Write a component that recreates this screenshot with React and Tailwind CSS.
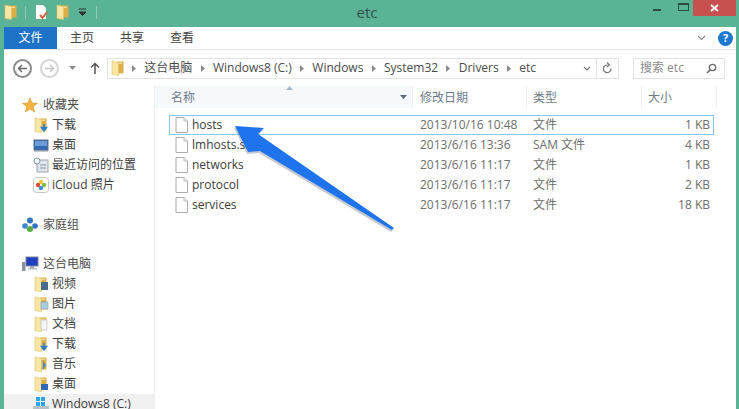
import React from 'react';

const FONT = "font-['Open_Sans','Noto_Sans_CJK_SC',sans-serif]";

const files = [
  { name: 'hosts', date: '2013/10/16 10:48', type: '文件', size: '1 KB', selected: true },
  { name: 'lmhosts.sam', date: '2013/6/16 13:36', type: 'SAM 文件', size: '4 KB' },
  { name: 'networks', date: '2013/6/16 11:17', type: '文件', size: '1 KB' },
  { name: 'protocol', date: '2013/6/16 11:17', type: '文件', size: '2 KB' },
  { name: 'services', date: '2013/6/16 11:17', type: '文件', size: '18 KB' },
];

const crumbs = ['这台电脑', 'Windows8 (C:)', 'Windows', 'System32', 'Drivers', 'etc'];

const Folder = ({ children }) => (
  <svg width="16" height="16" viewBox="0 0 16 16" className="shrink-0">
    <path d="M7 1.5 H13.5 V13.5 H7 Z" fill="#dcae45" />
    <path d="M8 2.5 H12 V4 H8 Z" fill="#f4dd92" />
    <path d="M2 1 L8.5 2.5 V15.5 L2 14.5 Z" fill="#f7e6a6" stroke="#e2bf5e" strokeWidth=".6" />
    {children}
  </svg>
);

const FileIcon = () => (
  <svg width="13" height="16" viewBox="0 0 13 16" className="shrink-0">
    <path d="M1 .5 H9 L12.5 4 V15.5 H1 Z" fill="#fff" stroke="#a9a9a9" />
    <path d="M9 .5 V4 H12.5" fill="#eee" stroke="#bbb" />
  </svg>
);

const Star = () => (
  <svg width="16" height="16" viewBox="0 0 16 16" className="shrink-0">
    <path d="M8 1 L10 6 L15.5 6.3 L11.2 9.7 L12.7 15 L8 12 L3.3 15 L4.8 9.7 L.5 6.3 L6 6 Z" fill="#f5b53f" stroke="#d98e2b" strokeWidth=".6" />
  </svg>
);

const Desktop = () => (
  <svg width="16" height="16" viewBox="0 0 16 16" className="shrink-0">
    <rect x="1" y="3" width="14" height="10" fill="#2f6bb5" stroke="#5a6f8c" />
    <rect x="2" y="4" width="12" height="5" fill="#6a9bd8" />
    <rect x="1" y="13" width="14" height="1.5" fill="#8a98a8" />
  </svg>
);

const Recent = () => (
  <svg width="16" height="16" viewBox="0 0 16 16" className="shrink-0">
    <rect x="4" y="3" width="11" height="12" fill="#dfe5ea" stroke="#9aa6b0" />
    <circle cx="4" cy="4" r="3" fill="#eef3f7" stroke="#8d99a3" />
    <path d="M7 8 H13 M7 11 H13" stroke="#8d99a3" />
  </svg>
);

const Photos = () => (
  <svg width="16" height="16" viewBox="0 0 16 16" className="shrink-0">
    <rect x=".5" y=".5" width="15" height="15" rx="3" fill="#fff" stroke="#c8c8c8" />
    <circle cx="8" cy="5" r="2.2" fill="#f4c430" />
    <circle cx="11" cy="8" r="2.2" fill="#7cbf3f" />
    <circle cx="8" cy="11" r="2.2" fill="#3f8fd8" />
    <circle cx="5" cy="8" r="2.2" fill="#e0483e" />
  </svg>
);

const Homegroup = () => (
  <svg width="16" height="16" viewBox="0 0 16 16" className="shrink-0">
    <circle cx="8" cy="3.5" r="3" fill="#2f74c4" />
    <circle cx="3" cy="9" r="2.8" fill="#3f86d4" />
    <circle cx="13" cy="9" r="2.8" fill="#2f74c4" />
    <circle cx="8" cy="12" r="3" fill="#5cab3f" />
  </svg>
);

const Computer = () => (
  <svg width="18" height="16" viewBox="0 0 18 16" className="shrink-0">
    <rect x="5" y="1" width="12" height="9" fill="#1f3fc0" stroke="#7b8794" />
    <path d="M9 10 H13 V12 H9 Z" fill="#9aa3ad" />
    <rect x="1" y="6" width="3.5" height="9" fill="#8a929b" />
    <rect x="7" y="12" width="9" height="1.5" fill="#b5bcc4" />
  </svg>
);

const Drive = () => (
  <svg width="16" height="16" viewBox="0 0 16 16" className="shrink-0">
    <path d="M3 1 H7 V5 H3 Z M8 1 H12 V5 H8 Z M3 6 H7 V10 H3 Z M8 6 H12 V10 H8 Z" fill="#2aa5e8" />
    <rect x="0" y="10" width="16" height="6" fill="#b9c0c6" />
  </svg>
);

const blueArrow = <path d="M11 7 V12 M8.5 10.5 L11 14 L13.5 10.5 Z" stroke="#2c7fd0" fill="#2c7fd0" strokeWidth="1.5" />;

const sideItem = (icon, label, key) => (
  <div key={key} className="flex items-center h-5 pl-[29px] gap-[3px] text-[#3c3c3c]">
    {icon}
    <span>{label}</span>
  </div>
);

const sideHead = (icon, label, mt) => (
  <div className={`flex items-center h-5 pl-[18px] gap-[5px] text-[#4a4a4a] ${mt}`}>
    <span className="w-4 flex justify-center">{icon}</span>
    <span>{label}</span>
  </div>
);

const App = () => {
  return (
    <div className={`relative w-[739px] h-[409px] overflow-hidden bg-[#5bb396] flex flex-col text-[12px] ${FONT}`}>
      {/* Title bar */}
      <div className="h-[27px] shrink-0 flex items-start relative">
        <div className="flex items-center h-[24px] pl-[3px]">
          <Folder />
          <div className="w-px h-[13px] bg-[#8fcbb6] ml-[6px]" />
          <svg width="16" height="16" viewBox="0 0 16 16" className="ml-[7px]">
            <path d="M3 1 H10 L13 4 V15 H3 Z" fill="#fff" />
            <path d="M7 11 L9.5 14 L14 8" stroke="#d9603a" strokeWidth="2" fill="none" />
          </svg>
          <span className="ml-[6px] flex"><Folder /></span>
          <svg width="9" height="8" viewBox="0 0 9 8" className="ml-[7px]">
            <path d="M1 1 H8 M1 4 H8 L4.5 7.5 Z" stroke="#333" fill="#333" strokeWidth="1" />
          </svg>
          <div className="w-px h-[13px] bg-[#8fcbb6] ml-[9px]" />
        </div>
        <div className="flex-1 text-center text-[15px] leading-[24px] text-[#35504a] pr-[16px]">etc</div>
        <div className="flex items-start">
          <div className="w-[8px] h-[2px] bg-[#2c4a40] mt-[9px] mr-[17px]" />
          <div className="w-[11px] h-[8px] border border-[#2c4a40] border-t-2 mt-[3px] mr-[4px]" />
          <div className="w-[43px] h-[16px] bg-[#c75050] text-white flex items-center justify-center mr-[3px]">
            <svg width="9" height="8" viewBox="0 0 9 8">
              <path d="M1 1 L8 7 M8 1 L1 7" stroke="#fff" strokeWidth="1.8" />
            </svg>
          </div>
        </div>
      </div>

      {/* Window body */}
      <div className="ml-[4px] mr-[3px] flex-1 min-h-0 bg-white flex flex-col">
        {/* Ribbon tabs */}
        <div className="h-[23px] shrink-0 flex items-center border-b border-[#e4e4e4] text-[#444]">
          <div className="w-[53px] h-[22px] bg-[#1e73c8] text-white flex items-center justify-center">文件</div>
          <div className="ml-[13px]">主页</div>
          <div className="ml-[26px]">共享</div>
          <div className="ml-[26px]">查看</div>
          <div className="ml-auto flex items-center gap-[12px] pr-[3px]">
            <svg width="9" height="6" viewBox="0 0 9 6"><path d="M1 1 L4.5 4.5 L8 1" stroke="#888" fill="none" strokeWidth="1.2" /></svg>
            <div className="w-[15px] h-[15px] rounded-full bg-[#1f78d0] text-white flex items-center justify-center text-[11px] font-bold">?</div>
          </div>
        </div>

        {/* Nav bar */}
        <div className="h-[36px] shrink-0 flex items-center">
          <div className="w-[19px] h-[19px] ml-[9px] rounded-full border-2 border-[#8b8b8b] flex items-center justify-center">
            <svg width="11" height="9" viewBox="0 0 11 9"><path d="M5 1 L1.5 4.5 L5 8 M1.5 4.5 H10" stroke="#666" fill="none" strokeWidth="1.4" /></svg>
          </div>
          <div className="w-[19px] h-[19px] ml-[8px] rounded-full border-2 border-[#d5d5d5] flex items-center justify-center">
            <svg width="11" height="9" viewBox="0 0 11 9"><path d="M6 1 L9.5 4.5 L6 8 M9.5 4.5 H1" stroke="#c4c4c4" fill="none" strokeWidth="1.4" /></svg>
          </div>
          <svg width="7" height="4" viewBox="0 0 7 4" className="ml-[10px]"><path d="M0 0 H7 L3.5 4 Z" fill="#8a8a8a" /></svg>
          <svg width="10" height="12" viewBox="0 0 10 12" className="ml-[14px]"><path d="M5 12 V1.5 M1 5.5 L5 1.5 L9 5.5" stroke="#555" fill="none" strokeWidth="1.5" /></svg>
          <div className="w-[512px] h-[21px] ml-[7px] border border-[#e2e2e2] flex items-center text-[#4a4a4a]">
            <span className="ml-[2px] flex"><Folder /></span>
            <div className="flex items-center gap-[8.3px] ml-[6px]">
              {crumbs.map((c) => (
                <React.Fragment key={c}>
                  <svg width="4" height="7" viewBox="0 0 4 7" className="shrink-0"><path d="M0 0 L4 3.5 L0 7 Z" fill="#8a8a8a" /></svg>
                  <span>{c}</span>
                </React.Fragment>
              ))}
            </div>
            <svg width="8" height="5" viewBox="0 0 8 5" className="ml-auto mr-[5px]"><path d="M1 1 L4 4 L7 1" stroke="#777" fill="none" strokeWidth="1.2" /></svg>
            <div className="w-[22px] h-full border-l border-[#e2e2e2] flex items-center justify-center">
              <svg width="11" height="12" viewBox="0 0 11 12"><path d="M9 6.5 A3.8 3.8 0 1 1 5.5 3 M5 0.5 L7.5 3 L5 5" stroke="#777" fill="none" strokeWidth="1.2" /></svg>
            </div>
          </div>
          <div className="w-[92px] h-[21px] ml-[14px] border border-[#e2e2e2] flex items-center pl-[6px] text-[#8a8a8a]">
            <span>搜索 etc</span>
            <svg width="11" height="11" viewBox="0 0 11 11" className="ml-auto mr-[7px]"><circle cx="6.5" cy="4.5" r="3.2" stroke="#666" fill="none" strokeWidth="1.3" /><path d="M4 7 L1 10" stroke="#666" strokeWidth="1.6" /></svg>
          </div>
        </div>

        {/* Sidebar + list */}
        <div className="flex-1 min-h-0 flex overflow-hidden">
          <div className="w-[151px] shrink-0 pt-[9px] border-r border-[#f0f0f0]">
            {sideHead(<Star />, '收藏夹', '')}
            {sideItem(<Folder>{blueArrow}</Folder>, '下载', 'fav-dl')}
            {sideItem(<Desktop />, '桌面', 'fav-desk')}
            {sideItem(<Recent />, '最近访问的位置', 'fav-recent')}
            {sideItem(<Photos />, 'iCloud 照片', 'fav-icloud')}
            {sideHead(<Homegroup />, '家庭组', 'mt-[20px]')}
            {sideHead(<Computer />, '这台电脑', 'mt-[19px]')}
            {sideItem(<Folder><rect x="8" y="6" width="7" height="8" fill="#4a6a8c" /></Folder>, '视频', 'pc-video')}
            {sideItem(<Folder><rect x="8" y="6" width="7" height="7" fill="#a8cfe0" stroke="#7c98a8" strokeWidth=".6" /></Folder>, '图片', 'pc-pic')}
            {sideItem(<Folder><rect x="8" y="4" width="6" height="10" fill="#f4f4f4" stroke="#b5b5b5" strokeWidth=".6" /></Folder>, '文档', 'pc-doc')}
            {sideItem(<Folder>{blueArrow}</Folder>, '下载', 'pc-dl')}
            {sideItem(<Folder><path d="M10 5 L13 9 L10 14 Z" fill="#3a8fd0" /></Folder>, '音乐', 'pc-music')}
            {sideItem(<Folder><rect x="8" y="8" width="7" height="6" fill="#2f6bb5" /></Folder>, '桌面', 'pc-desk')}
            <div className="bg-[#f0f0f0] h-5">
              {sideItem(<Drive />, 'Windows8 (C:)', 'pc-c')}
            </div>
          </div>

          <div className="flex-1 min-w-0">
            {/* Column headers */}
            <div className="h-[22px] flex items-center text-[#6d7a88]">
              <div className="relative w-[258px] h-full bg-[#f6f9fc] border-r border-[#e8eef4] flex items-center pl-[16px] pt-[2px]">
                名称
                <svg width="7" height="4" viewBox="0 0 7 4" className="absolute left-[131px] top-0"><path d="M0 4 L3.5 0 L7 4 Z" fill="#a9b8c6" /></svg>
                <svg width="7" height="4" viewBox="0 0 7 4" className="absolute right-[5px] top-[9px]"><path d="M0 0 H7 L3.5 4 Z" fill="#5a6876" /></svg>
              </div>
              <div className="w-[114px] h-full border-r border-[#eef1f4] flex items-center pl-[7px] pt-[2px]">修改日期</div>
              <div className="w-[115px] h-full border-r border-[#eef1f4] flex items-center pl-[6px] pt-[2px]">类型</div>
              <div className="w-[75px] h-full border-r border-[#eef1f4] flex items-center pl-[6px] pt-[2px]">大小</div>
            </div>

            {/* File rows */}
            <div className="mt-[7px] ml-[14px] w-[545px]">
              {files.map((f) => (
                <div key={f.name} className={`relative h-5 flex items-center border ${f.selected ? 'border-[#84c6ec]' : 'border-transparent'}`}>
                  <span className="ml-[5px] flex"><FileIcon /></span>
                  <span className="w-[232px] pl-[4px] text-[#3c3c3c]">{f.name}</span>
                  <span className="w-[113px] text-[#6d6d6d] whitespace-nowrap">{f.date}</span>
                  <span className="text-[#6d6d6d]">{f.type}</span>
                  <span className="ml-auto pr-[3px] text-[#6d6d6d]">{f.size}</span>
                </div>
              ))}
            </div>
          </div>
        </div>
      </div>

      {/* Arrow annotation over the list */}
      <svg width="739" height="409" viewBox="0 0 739 409" className="absolute left-0 top-0 pointer-events-none">
        <path d="M248 152 L260 151 L392 230 L394 228 L258 134 L264 128 L235 126 Z" fill="#3d4d66" opacity=".3" transform="translate(-1 2)" />
        <path d="M248 152 L260 151 L392 230 L394 228 L258 134 L264 128 L235 126 Z" fill="#1f74ee" />
      </svg>
    </div>
  );
};

export default App;
